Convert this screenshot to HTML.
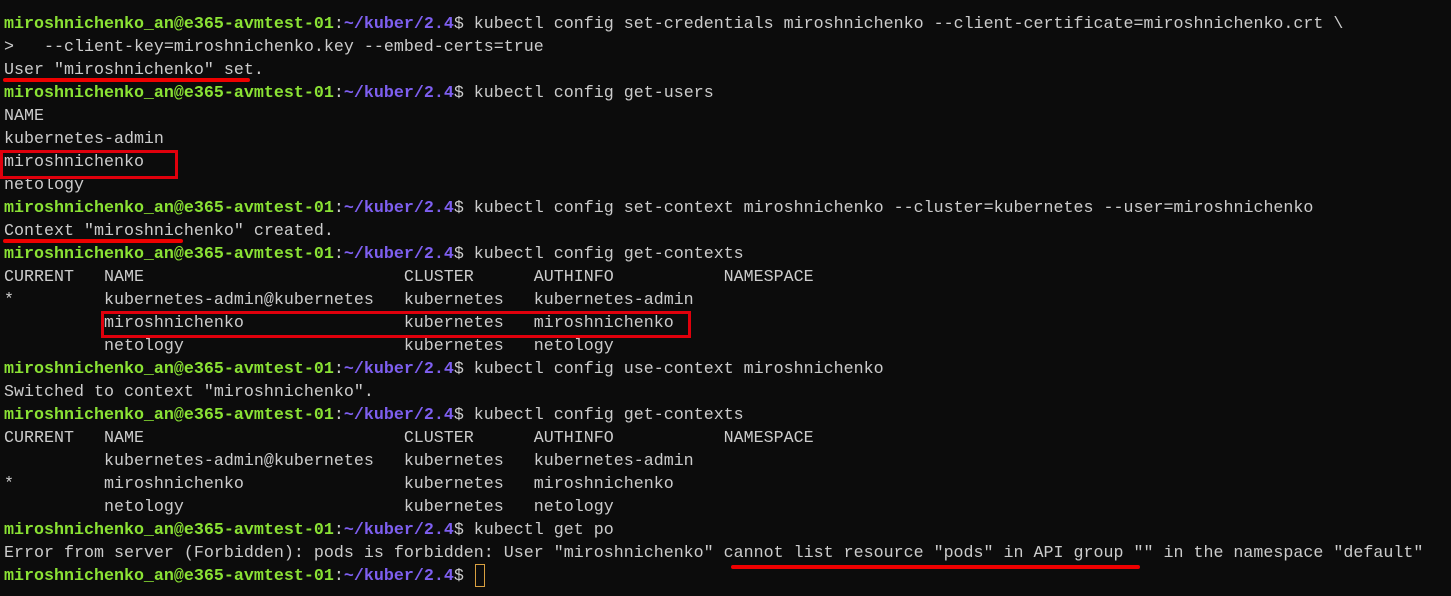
<!DOCTYPE html>
<html><head><meta charset="utf-8"><style>
html,body{margin:0;padding:0;background:#0c0c0c;width:1451px;height:596px;overflow:hidden;position:relative}
pre{margin:0;position:absolute;left:4px;top:13px;font-family:"Liberation Mono",monospace;font-size:16.66px;line-height:23px;color:#cccccc;white-space:pre}
.g{color:#8ae234;font-weight:bold}
.p{color:#7e5ff0;font-weight:bold}
.box{position:absolute;border:3px solid #e0000c;box-sizing:border-box}
.ul{position:absolute;height:4px;background:#ef0000;border-radius:2px}
.cur{position:absolute;left:475px;top:564px;width:10px;height:23px;border:1px solid #d9a040;box-sizing:border-box}
</style></head><body>
<pre><span class="g">miroshnichenko_an@e365-avmtest-01</span>:<span class="p">~/kuber/2.4</span>$ kubectl config set-credentials miroshnichenko --client-certificate=miroshnichenko.crt \
&gt;   --client-key=miroshnichenko.key --embed-certs=true
User "miroshnichenko" set.
<span class="g">miroshnichenko_an@e365-avmtest-01</span>:<span class="p">~/kuber/2.4</span>$ kubectl config get-users
NAME
kubernetes-admin
miroshnichenko
netology
<span class="g">miroshnichenko_an@e365-avmtest-01</span>:<span class="p">~/kuber/2.4</span>$ kubectl config set-context miroshnichenko --cluster=kubernetes --user=miroshnichenko
Context "miroshnichenko" created.
<span class="g">miroshnichenko_an@e365-avmtest-01</span>:<span class="p">~/kuber/2.4</span>$ kubectl config get-contexts
CURRENT   NAME                          CLUSTER      AUTHINFO           NAMESPACE
*         kubernetes-admin@kubernetes   kubernetes   kubernetes-admin
          miroshnichenko                kubernetes   miroshnichenko
          netology                      kubernetes   netology
<span class="g">miroshnichenko_an@e365-avmtest-01</span>:<span class="p">~/kuber/2.4</span>$ kubectl config use-context miroshnichenko
Switched to context "miroshnichenko".
<span class="g">miroshnichenko_an@e365-avmtest-01</span>:<span class="p">~/kuber/2.4</span>$ kubectl config get-contexts
CURRENT   NAME                          CLUSTER      AUTHINFO           NAMESPACE
          kubernetes-admin@kubernetes   kubernetes   kubernetes-admin
*         miroshnichenko                kubernetes   miroshnichenko
          netology                      kubernetes   netology
<span class="g">miroshnichenko_an@e365-avmtest-01</span>:<span class="p">~/kuber/2.4</span>$ kubectl get po
Error from server (Forbidden): pods is forbidden: User "miroshnichenko" cannot list resource "pods" in API group "" in the namespace "default"
<span class="g">miroshnichenko_an@e365-avmtest-01</span>:<span class="p">~/kuber/2.4</span>$ </pre>
<div class="box" style="left:0;top:150px;width:178px;height:29px"></div>
<div class="box" style="left:101px;top:311px;width:590px;height:27px"></div>
<div class="ul" style="left:3px;top:78px;width:247px"></div>
<div class="ul" style="left:3px;top:239px;width:180px"></div>
<div class="ul" style="left:731px;top:565px;width:409px"></div>
<div class="cur"></div>
</body></html>
